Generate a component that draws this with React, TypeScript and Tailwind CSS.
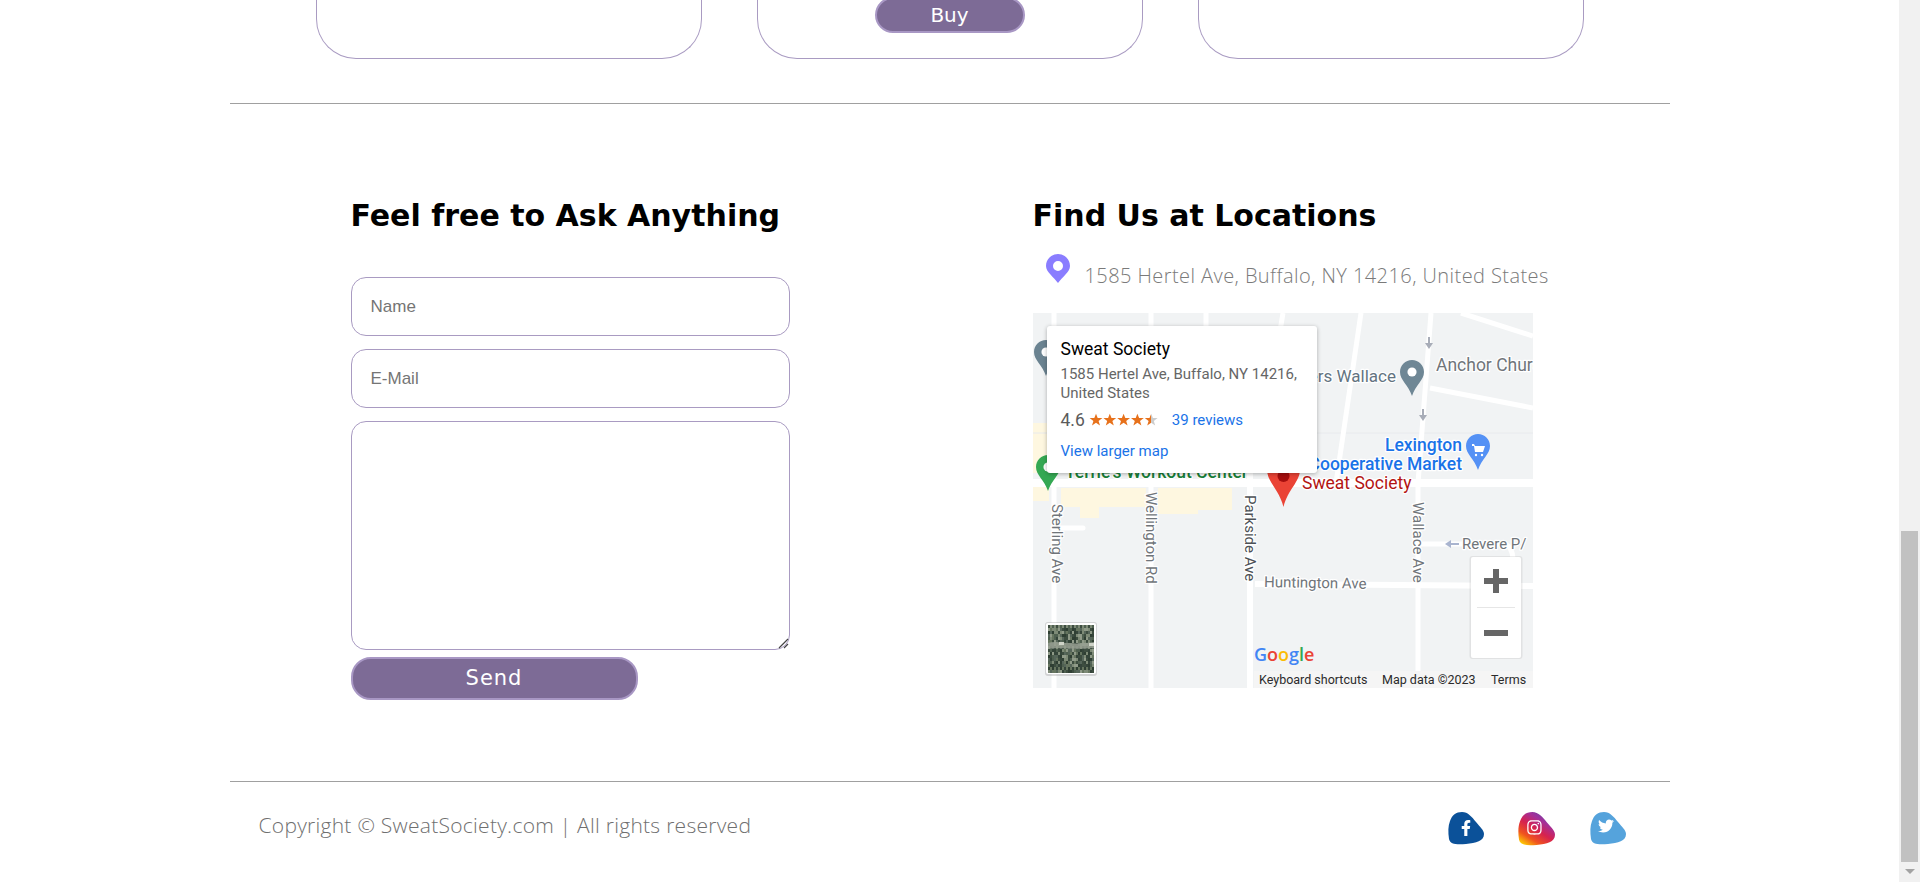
import { FaFacebookF, FaInstagram, FaTwitter } from "react-icons/fa";

const blob = "M14 0C20 0 24 5 28 10C32 15 36 18 36 22C36 29 28 31 18 32C8 33 2 32 1 27C0 20 0 14 2 9C4 3 8 0 14 0Z";

function Pin({ x, y, w, h, fill, dot = "#fff", dotR = 0.19 }: { x: number; y: number; w: number; h: number; fill: string; dot?: string; dotR?: number }) {
  return (
    <svg x={x} y={y} width={w} height={h} viewBox="0 0 24 36">
      <path d="M12 0C5.4 0 0 5.3 0 11.9C0 20 8.5 25 12 36C15.5 25 24 20 24 11.9C24 5.3 18.6 0 12 0Z" fill={fill} />
      <circle cx="12" cy="12" r={24 * dotR} fill={dot} />
    </svg>
  );
}

function Label({ x, y, children, fill = "#70757a", size = 15, anchor = "start", weight = 400, rotate }: { x: number; y: number; children: string; fill?: string; size?: number; anchor?: "start" | "end" | "middle"; weight?: number; rotate?: number }) {
  return (
    <text x={x} y={y} fill={fill} fontSize={size} fontWeight={weight} textAnchor={anchor} stroke="#fff" strokeWidth={2.5} paintOrder="stroke" strokeLinejoin="round" transform={rotate !== undefined ? `rotate(${rotate} ${x} ${y})` : undefined} fontFamily="Roboto, sans-serif">
      {children}
    </text>
  );
}

function Thumb() {
  const tones = ["#3d4d40", "#66755f", "#2f3f33", "#7d8a76", "#4f6050", "#8f9a88", "#35453a", "#56665a"];
  const cells: { x: number; y: number; f: string }[] = [];
  for (let j = 0; j < 16; j++) {
    for (let i = 0; i < 23; i++) {
      cells.push({ x: 15 + i * 2, y: 312 + j * 3, f: tones[(i * i * 3 + j * 5 + ((i * j) % 7)) % 8] });
    }
  }
  return (
    <g>
      {cells.map((c, k) => (
        <rect key={k} x={c.x} y={c.y} width="2" height="3" fill={c.f} />
      ))}
      <path d="M15 330C25 327 35 333 61 329V335C40 337 25 334 15 336Z" fill="#98a093" opacity="0.85" />
      <rect x="26" y="329" width="5" height="3" fill="#cfd3c8" />
      <rect x="56" y="330" width="5" height="3" fill="#cfd3c8" />
    </g>
  );
}

function MapArt() {
  return (
    <svg viewBox="0 0 500 375" width="500" height="375" className="block">
      <rect width="500" height="375" fill="#f1f3f4" />
      <g fill="#fef7e0">
        <path d="M0 110H14V160H0Z" />
        <path d="M0 174H16V188H0Z" />
        <path d="M28 175H113V194H66V205H47V194H28Z" />
        <path d="M125 175H199V197H165V201H125Z" />
      </g>
      <path d="M0 120H500" stroke="#e8eaed" strokeWidth="1" />
      <g stroke="#fff" fill="none">
        <path d="M0 170H500" strokeWidth="8" />
        <path d="M222 271L500 273" strokeWidth="6" />
        <path d="M21 0V375" strokeWidth="5" />
        <path d="M118 0V375" strokeWidth="5" />
        <path d="M173 0V170" strokeWidth="5" />
        <path d="M217 160V375" strokeWidth="6" />
        <path d="M250 0L240 60" strokeWidth="5" />
        <path d="M328 0L303 170" strokeWidth="5" />
        <path d="M398 0L385 170V375" strokeWidth="5" />
        <path d="M428 0L500 23" strokeWidth="5" />
        <path d="M397 75L500 95" strokeWidth="5" />
        <path d="M385 231H470C476 231 480 238 480 247V270" strokeWidth="5" />
        <path d="M24 215H50" strokeWidth="5" strokeLinecap="round" />
      </g>

      <Pin x={1} y={27} w={24} h={36} fill="#6b8391" />
      <Pin x={367} y={47} w={24} h={36} fill="#6f8795" />
      <g fill="#a8adb8">
        <path d="M395 24h2v6h3l-4 6l-4-6h3Z" />
        <path d="M389 96h2v6h3l-4 6l-4-6h3Z" />
      </g>
      <Label x={363} y={69} fill="#637381" anchor="end" size={17}>Chambers Wallace</Label>
      <Label x={403} y={58} size={17.5}>Anchor Church</Label>
      <Label x={429} y={138} fill="#1a73e8" anchor="end" size={17.5} weight={500}>Lexington</Label>
      <Label x={429} y={157} fill="#1a73e8" anchor="end" size={17.5} weight={500}>Cooperative Market</Label>
      <Pin x={433} y={121} w={24} h={36} fill="#5491f5" dot="#5491f5" />
      <path d="M439 131h2l1 2h10l-2 6h-8l-1-6h-2Z" fill="#fff" />
      <circle cx="443" cy="142" r="1.2" fill="#fff" />
      <circle cx="449" cy="142" r="1.2" fill="#fff" />

      <Pin x={3} y={142} w={24} h={36} fill="#34a853" />
      <Label x={32} y={165} fill="#188038" size={17.5} weight={500}>Terrie's Workout Center</Label>

      <Label x={19} y={191} rotate={90} size={15}>Sterling Ave</Label>
      <Label x={113} y={179} rotate={90} size={15}>Wellington Rd</Label>
      <Label x={212} y={182} rotate={90} fill="#4d5156" size={15}>Parkside Ave</Label>
      <Label x={380} y={189} rotate={90} size={15}>Wallace Ave</Label>
      <Label x={231} y={274} rotate={1} size={15}>Huntington Ave</Label>
      <Label x={429} y={236} size={15}>Revere P/</Label>
      <path d="M412 231l6-4v3h8v2h-8v3Z" fill="#a9b4cf" />

      <svg x={234} y={140} width={33} height={54} viewBox="0 0 33 54">
        <path d="M16.500 0C7.400 0 0 7.400 0 16.500C0 29 12 36 16.500 54C21 36 33 29 33 16.500C33 7.400 25.600 0 16.500 0Z" fill="#ea4335" />
        <circle cx="16.500" cy="23" r="6" fill="#a50e0e" />
      </svg>
      <Label x={269} y={176} fill="#b31412" size={17.5}>Sweat Society</Label>

      <g fontFamily="Open Sans, sans-serif" fontSize="18" fontWeight="600">
        <text x="221" y="348">
          <tspan fill="#4285f4">G</tspan>
          <tspan fill="#ea4335">o</tspan>
          <tspan fill="#fbbc04">o</tspan>
          <tspan fill="#4285f4">g</tspan>
          <tspan fill="#34a853">l</tspan>
          <tspan fill="#ea4335">e</tspan>
        </text>
      </g>

      <rect x="221" y="358" width="279" height="17" fill="#f5f5f5" />
      <g fontFamily="Roboto, sans-serif" fontSize="12.500" fill="#2b2b2b">
        <text x="226" y="371">Keyboard shortcuts</text>
        <text x="349" y="371">Map data ©2023</text>
        <text x="458" y="371">Terms</text>
      </g>

      <rect x="12" y="309" width="52" height="54" fill="#999" opacity="0.35" rx="3" />
      <rect x="13" y="310" width="50" height="51" fill="#fff" rx="2" />
      <Thumb />

      <rect x="436.500" y="243" width="53" height="103" fill="#aaa" opacity="0.22" rx="3" />
      <rect x="438" y="244" width="50" height="101" fill="#fff" rx="2" />
      <path d="M444 294.500H482" stroke="#e6e6e6" />
      <path d="M460 256h6v9h9v6h-9v9h-6v-9h-9v-6h9Z" fill="#666" />
      <path d="M451 317h24v6h-24Z" fill="#666" />
    </svg>
  );
}

function Stars() {
  const p = "M7 .8L8.700 5H13.400L9.600 7.900L11 12.600L7 9.800L3 12.600L4.400 7.900L.6 5H5.300Z";
  return (
    <svg width="69" height="14" viewBox="0 0 69 14" className="mr-[2px] ml-[4px]">
      <defs>
        <linearGradient id="half">
          <stop offset="50%" stopColor="#e7711b" />
          <stop offset="50%" stopColor="#ccc" />
        </linearGradient>
      </defs>
      {[0, 1, 2, 3, 4].map((i) => (
        <path key={i} d={p} transform={`translate(${i * 13.800} 0)`} fill={i === 4 ? "url(#half)" : "#e7711b"} />
      ))}
    </svg>
  );
}

function Social() {
  return (
    <div className="mt-[5px] flex gap-[34px] pr-[44px]">
      <svg width="36" height="33" viewBox="0 0 36 33">
        <path d={blob} fill="#0b5199" />
        <FaFacebookF x={10} y={8} width={15} height={15} color="#fff" />
      </svg>
      <svg width="37" height="34" viewBox="0 0 36 33">
        <defs>
          <linearGradient id="ig" x1="0.1" y1="1" x2="0.8" y2="0">
            <stop offset="0" stopColor="#ffdd00" />
            <stop offset="0.25" stopColor="#f0541e" />
            <stop offset="0.5" stopColor="#d6224f" />
            <stop offset="0.75" stopColor="#a3309a" />
            <stop offset="1" stopColor="#5b4aa8" />
          </linearGradient>
        </defs>
        <path d={blob} fill="url(#ig)" />
        <FaInstagram x={8} y={7} width={18} height={18} color="#fff" />
      </svg>
      <svg width="36" height="33" viewBox="0 0 36 33" className="ml-[1px]">
        <path d={blob} fill="#55a3dc" />
        <FaTwitter x={8} y={6} width={19} height={19} color="#fff" />
      </svg>
    </div>
  );
}

export default function App() {
  return (
    <div className="flex h-[882px] overflow-hidden bg-white">
      <div className="flex-1 min-w-0">
        <div className="mx-auto w-[1440px]">
          <div className="flex justify-center gap-[55px]">
            <div className="h-[59px] w-[386px] rounded-b-[40px] border-x border-b border-[#a99bc2]" />
            <div className="flex h-[59px] w-[386px] justify-center rounded-b-[40px] border-x border-b border-[#a99bc2]">
              <button className="mt-[-3px] h-[36px] w-[150px] rounded-[20px] border-2 border-[#a897c4] bg-[#7d6b96] font-['DejaVu_Sans',sans-serif] text-[20px] text-white">Buy</button>
            </div>
            <div className="h-[59px] w-[386px] rounded-b-[40px] border-x border-b border-[#a99bc2]" />
          </div>

          <div className="mt-[44px] h-[679px] border-y border-[#a0a0a0] pl-[121px] pt-[91px]">
            <div className="flex">
              <div className="w-[682px]">
                <h2 className="h-[40px] font-['DejaVu_Sans',sans-serif] text-[30px] leading-[42px] font-bold whitespace-nowrap text-black">Feel free to Ask Anything</h2>
                <input placeholder="Name" className="mt-[42px] block h-[59px] w-[439px] rounded-[15px] border border-[#a99bc2] pl-[19px] font-['Liberation_Sans',sans-serif] text-[17px] outline-none placeholder:text-[#757575]" />
                <input placeholder="E-Mail" className="mt-[13px] block h-[59px] w-[439px] rounded-[15px] border border-[#a99bc2] pl-[19px] font-['Liberation_Sans',sans-serif] text-[17px] outline-none placeholder:text-[#757575]" />
                <div className="relative mt-[13px] h-[229px] w-[439px]">
                  <textarea className="block h-full w-full resize-none rounded-[15px] border border-[#a99bc2] outline-none" />
                  <svg width="11" height="11" viewBox="0 0 11 11" className="absolute right-[1px] bottom-[1px]">
                    <path d="M1 10L10 1M6 10L10 6" stroke="#444" strokeWidth="1.2" fill="none" />
                  </svg>
                </div>
                <button className="mt-[7px] block h-[43px] w-[287px] rounded-[20px] border-2 border-[#a897c4] bg-[#7d6b96] font-['DejaVu_Sans',sans-serif] text-[21px] tracking-[1px] text-white">Send</button>
              </div>
              <div>
                <h2 className="h-[40px] font-['DejaVu_Sans',sans-serif] text-[30px] leading-[42px] font-bold whitespace-nowrap text-black">Find Us at Locations</h2>
                <div className="mt-[19px] flex h-[59px] items-start pl-[13px]">
                  <svg width="24" height="29" viewBox="0 0 24 29">
                    <path fillRule="evenodd" d="M12 0C5.400 0 0 5.300 0 11.900C0 18 8 23 12 29C16 23 24 18 24 11.900C24 5.300 18.600 0 12 0ZM12 7A5 5 0 1 1 12 17A5 5 0 1 1 12 7Z" fill="#8a7dff" />
                  </svg>
                  <span className="mt-[7px] ml-[15px] whitespace-nowrap font-['Open_Sans',sans-serif] text-[20px] leading-[30px] font-light tracking-[0.43px] text-[#7a7a7a]">1585 Hertel Ave, Buffalo, NY 14216, United States</span>
                </div>
                <div className="relative h-[375px] w-[500px] overflow-hidden">
                  <MapArt />
                  <div className="absolute top-[13px] left-[14px] h-[147px] w-[270px] rounded-[3px] bg-white px-[14px] pt-[11px] font-['Roboto',sans-serif] shadow-[0_1px_4px_rgba(0,0,0,0.3)]">
                    <div className="text-[17.5px] leading-[24px] whitespace-nowrap text-black">Sweat Society</div>
                    <div className="mt-[4px] text-[15px] leading-[19px] text-[#666]">1585 Hertel Ave, Buffalo, NY 14216, United States</div>
                    <div className="mt-[6px] flex h-[22px] items-center">
                      <span className="text-[17.5px] text-[#5b5b5b]">4.6</span>
                      <Stars />
                      <span className="ml-[12px] text-[15px] text-[#1a73e8]">39 reviews</span>
                    </div>
                    <div className="mt-[10px] text-[15px] leading-[20px] text-[#1a73e8]">View larger map</div>
                  </div>
                </div>
              </div>
            </div>
          </div>

          <div className="flex h-[88px] items-center justify-between pl-[29px]">
            <span className="font-['Open_Sans',sans-serif] text-[21px] font-light tracking-[0.27px] text-[#6f6f6f]">Copyright © SweatSociety.com | All rights reserved</span>
            <Social />
          </div>
        </div>
      </div>
      <div className="flex w-[21px] shrink-0 flex-col items-center bg-[#f1f1f1]">
        <div className="h-[531px] w-full" />
        <div className="h-[331px] w-[17px] bg-[#c1c1c1]" />
        <div className="mt-[7px] h-0 w-0 border-x-[5px] border-t-[5px] border-x-transparent border-t-[#a3a3a3]" />
      </div>
    </div>
  );
}
